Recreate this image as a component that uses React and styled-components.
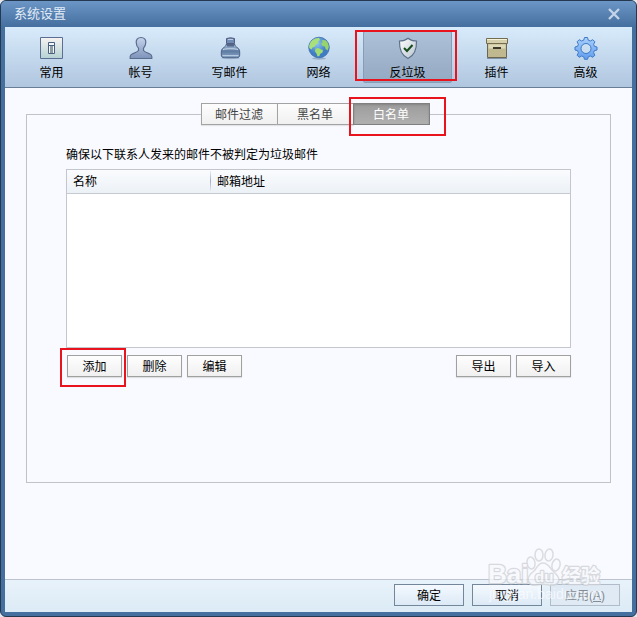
import React, { useState } from 'react'
import styled, { createGlobalStyle } from 'styled-components'

const tools = [
  { name: '常用', icon: GeneralIcon },
  { name: '帐号', icon: AccountIcon },
  { name: '写邮件', icon: ComposeIcon },
  { name: '网络', icon: NetworkIcon },
  { name: '反垃圾', icon: ShieldIcon, marked: true },
  { name: '插件', icon: PluginIcon },
  { name: '高级', icon: GearIcon },
]

const tabs = [
  { name: '邮件过滤' },
  { name: '黑名单' },
  { name: '白名单', marked: true },
]

function App() {
  const [tool, setTool] = useState('反垃圾')
  const [tab, setTab] = useState('白名单')

  return (
    <>
      <GlobalStyle />
      <Window>
        <TitleBar>
          <Title>系统设置</Title>
          <CloseButton aria-label="关闭">
            <svg width="12" height="12" viewBox="0 0 12 12">
              <path d="M1 1 11 11M11 1 1 11" stroke="#c3d4e8" strokeWidth="2.4" />
            </svg>
          </CloseButton>
        </TitleBar>
        <Body>
          <Toolbar>
            {tools.map(({ name, icon: Icon, marked }) => (
              <Anchor key={name}>
                <ToolButton $active={tool === name} onClick={() => setTool(name)}>
                  <Icon />
                  {name}
                </ToolButton>
                {marked && <ToolMark />}
              </Anchor>
            ))}
          </Toolbar>
          <Main>
            <Group>
              <Tabs>
                {tabs.map(({ name, marked }) => (
                  <Anchor key={name}>
                    <Tab $active={tab === name} onClick={() => setTab(name)}>{name}</Tab>
                    {marked && <TabMark />}
                  </Anchor>
                ))}
              </Tabs>
              <Hint>确保以下联系人发来的邮件不被判定为垃圾邮件</Hint>
              <List>
                <Table>
                  <thead>
                    <tr>
                      <NameHead>名称</NameHead>
                      <Head>邮箱地址</Head>
                    </tr>
                  </thead>
                  <tbody />
                </Table>
              </List>
              <Actions>
                <Buttons>
                  <Anchor>
                    <Button>添加</Button>
                    <AddMark />
                  </Anchor>
                  <Button>删除</Button>
                  <Button>编辑</Button>
                </Buttons>
                <Buttons>
                  <Button>导出</Button>
                  <Button>导入</Button>
                </Buttons>
              </Actions>
            </Group>
          </Main>
          <Footer>
            <FooterButton>确定</FooterButton>
            <FooterButton>取消</FooterButton>
            <FooterButton disabled>应用(<u>A</u>)</FooterButton>
            <Watermark />
          </Footer>
        </Body>
      </Window>
    </>
  )
}

function GeneralIcon() {
  return (
    <Icon viewBox="0 0 24 24">
      <defs>
        <linearGradient id="general" x2="0" y2="1">
          <stop offset="0" stopColor="#f6f3f1" />
          <stop offset="1" stopColor="#b5d2d3" />
        </linearGradient>
      </defs>
      <path d="M.5 1.500h22v21H.5z" fill="url(#general)" stroke="#5c6e91" />
      <path d="M8.500 6.500h6v11h-6z" fill="#f4f8fa" stroke="#4a5f80" />
      <path d="M10 10h3v7h-3z" fill="#8e9da3" />
      <path d="M8.500 9.500h6" stroke="#4a5f80" />
    </Icon>
  )
}

function AccountIcon() {
  return (
    <Icon viewBox="0 0 24 24">
      <defs>
        <linearGradient id="account" x2="0" y2="1">
          <stop offset="0" stopColor="#c5d3ec" />
          <stop offset="1" stopColor="#7d93b9" />
        </linearGradient>
      </defs>
      <path
        d="M12 1.500c-3.200 0-5 2-4.800 5 .1 2.200.9 4.300 2.300 5.700v2.300c-1 1.700-3.600 2.400-6 3.300-1.600.7-2.300 1.600-2.300 2.700v2h21.600v-2c0-1.100-.7-2-2.300-2.700-2.400-.9-5-1.600-6-3.300v-2.300c1.400-1.400 2.200-3.500 2.300-5.700.2-3-1.600-5-4.800-5z"
        fill="url(#account)"
        stroke="#5b6d8f"
        strokeWidth="1.200"
      />
    </Icon>
  )
}

function ComposeIcon() {
  return (
    <Icon viewBox="0 0 24 24">
      <defs>
        <linearGradient id="ink" x2="0" y2="1">
          <stop offset="0" stopColor="#a9bfda" />
          <stop offset=".5" stopColor="#5d7aa2" />
          <stop offset="1" stopColor="#8aa5c5" />
        </linearGradient>
      </defs>
      <ellipse cx="12.500" cy="22" rx="9.500" ry="1.200" fill="#7e96b6" opacity=".5" />
      <path d="M8 8.500c0 1.500-1 2.200-2.200 3C4 12.700 3.300 14 3.300 16v3c0 1.800 1 2.700 3 2.700h12.400c2 0 3-.9 3-2.700v-3c0-2-.7-3.300-2.500-4.500-1.200-.8-2.200-1.500-2.200-3z" fill="url(#ink)" stroke="#4d6288" />
      <path d="M4.500 19.500h16" stroke="#b5cbe2" />
      <path d="M5 13.500c2-1 13-1 15 0" fill="none" stroke="#cfdeee" />
      <path d="M8.500 2.500q4-1.500 8 0v5h-8z" fill="#718cb2" stroke="#525d84" />
      <path d="M10 3.500h5" stroke="#bacce2" />
      <path d="M9 8h7v2.500H9z" fill="#536788" />
    </Icon>
  )
}

function NetworkIcon() {
  return (
    <Icon viewBox="0 0 24 24">
      <defs>
        <radialGradient id="globe" cx=".4" cy=".3">
          <stop offset="0" stopColor="#8fc6ef" />
          <stop offset="1" stopColor="#3f7cc4" />
        </radialGradient>
      </defs>
      <ellipse cx="12" cy="22.500" rx="7" ry="1.200" fill="#6f88a6" opacity=".5" />
      <circle cx="12" cy="11.500" r="10.300" fill="url(#globe)" stroke="#3c6dab" strokeWidth=".8" />
      <path d="M5 4.500c2-2 5-2.800 7-2.500l1 2-2 1.500.5 1.500-2.500 1.500-1 2-2.500 1-1 2L2.200 12C1.800 9 3 6.500 5 4.500z" fill="#a8e07c" />
      <path d="m8.500 12.500 3-.5 2.500 1.500 2 .5-.5 2.500-2.500 1.500-.5 2-2 .5-1-3-1.500-2z" fill="#a0dc70" />
      <path d="m15 4 3.500.3c2 1.500 3.300 4 3.300 7l-1.300 3.200-2-1.500-.5-2.500-2.500-.5-1.500-2.500 1.500-1z" fill="#98d46c" />
    </Icon>
  )
}

function ShieldIcon() {
  return (
    <Icon viewBox="0 0 24 24">
      <defs>
        <linearGradient id="shield" x2="1" y2="1">
          <stop offset="0" stopColor="#fff" />
          <stop offset="1" stopColor="#b6c3cd" />
        </linearGradient>
      </defs>
      <path d="M12 2.200C9.500 4.300 6.500 5 3.500 5c-.3 8 1.500 14.200 8.500 17.500C19 19.200 20.800 13 20.500 5c-3 0-6-.7-8.500-2.800z" fill="url(#shield)" stroke="#5d708c" strokeWidth="1.200" />
      <path d="m8 12 3 3 5.500-6" fill="none" stroke="#144a1c" strokeWidth="2" />
    </Icon>
  )
}

function PluginIcon() {
  return (
    <Icon viewBox="0 0 24 24">
      <path d="M2 22h20v1H2z" fill="#8094a8" />
      <path d="M2.500 7.500h19v14h-19z" fill="#c0b98f" stroke="#6b6651" />
      <path d="M3.500 8.500h17v4h-17z" fill="#ddd8b6" />
      <path d="M1.500 2.500h21v5h-21z" fill="#d5cfab" stroke="#726c51" />
      <path d="M2 3.500h20" stroke="#f5f2da" />
      <path d="M8 12h8" stroke="#3c3a2d" strokeWidth="2" />
    </Icon>
  )
}

function GearIcon() {
  return (
    <Icon viewBox="0 0 24 24">
      <defs>
        <linearGradient id="gear" x2="0" y2="1">
          <stop offset="0" stopColor="#a9d0fb" />
          <stop offset="1" stopColor="#5f9cee" />
        </linearGradient>
      </defs>
      <path
        fillRule="evenodd"
        d="m10.500 1.500h3l.8 2.700 2 .8 2.500-1.300 2.100 2.100L19.600 8.300l.8 2L23 11v3l-2.600.7-.8 2 1.300 2.500-2.100 2.100-2.500-1.300-2 .8-.8 2.500h-3l-.8-2.500-2-.8-2.500 1.300-2.100-2.100 1.300-2.500-.8-2L1 14v-3l2.600-.7.8-2-1.300-2.500 2.100-2.100L7.700 5l2-.8zM12 7.500a5 5 0 1 0 0 10 5 5 0 0 0 0-10z"
        fill="url(#gear)"
        stroke="#3f78c4"
        strokeLinejoin="round"
      />
    </Icon>
  )
}

function Watermark() {
  return (
    <Mark viewBox="0 0 122 60" aria-hidden="true">
      <g fill="#f9faff" fillOpacity=".8" stroke="#d3d5d9" strokeWidth="1.500">
        <ellipse cx="43" cy="17" rx="4" ry="6" transform="rotate(-8 43 17)" />
        <ellipse cx="51" cy="9" rx="4" ry="6" />
        <ellipse cx="61" cy="9" rx="4" ry="6" transform="rotate(8 61 9)" />
        <ellipse cx="68" cy="19" rx="4" ry="6" transform="rotate(15 68 19)" />
        <path d="M55 17c-5 0-6 5-9 8-4 3-6 5-6 9 1 5 5 6 9 5 4-1 8-1 12 0 5 1 9 0 10-5 0-4-3-6-6-9s-5-8-10-8z" />
      </g>
      <g fontFamily="Liberation Sans, Noto Sans CJK SC, sans-serif" fontWeight="bold" paintOrder="stroke" fill="#f7f9fd" stroke="#d0d2d6" strokeWidth="2.500" strokeLinejoin="round">
        <text x="0" y="37" fontSize="26">Bai</text>
        <text x="47" y="36" fontSize="15">du</text>
        <text x="74" y="37" fontSize="19">经验</text>
      </g>
      <text x="1" y="53" fontSize="14" fontFamily="Liberation Sans, sans-serif" fill="#fff" fillOpacity=".8">
        jingyan.baidu.com
      </text>
    </Mark>
  )
}

const GlobalStyle = createGlobalStyle`
  * {
    box-sizing: border-box;
  }
  body {
    margin: 0;
    background: #e4e8ee;
  }
  body, button, table {
    font-family: "Liberation Sans", "Noto Sans CJK SC", sans-serif;
    font-size: 12px;
    line-height: 16px;
    color: #000;
  }
  button {
    margin: 0;
    padding: 2px 0 0;
  }
`;

const Window = styled.div`
  display: flex;
  flex-direction: column;
  min-height: 100vh;
  padding: 0 4px 4px;
  border: 1px solid #24384f;
  border-radius: 6px;
  background: #446f9f;
  overflow: hidden;
`;

const TitleBar = styled.header`
  display: flex;
  align-items: center;
  justify-content: space-between;
  height: 26px;
  margin: 0 -4px;
  padding: 0 16px 0 13px;
  background: linear-gradient(#6c96c6, #456f9f);
`;

const Title = styled.h1`
  margin: 0;
  font-size: 13px;
  font-weight: normal;
  color: #e2ecf7;
`;

const CloseButton = styled.button`
  display: flex;
  padding: 0;
  border: none;
  background: none;
`;

const Body = styled.div`
  flex: 1;
  display: flex;
  flex-direction: column;
  background: #f9faff;
`;

const Toolbar = styled.nav`
  display: grid;
  grid-template-columns: repeat(7, 1fr);
  padding: 4px 2px;
  border-bottom: 1px solid #667f96;
  background: linear-gradient(#d8ebfb, #b0c6df);
`;

/* holds a control together with the red frame drawn around it */
const Anchor = styled.div`
  position: relative;
`;

const ToolButton = styled.button`
  display: flex;
  flex-direction: column;
  align-items: center;
  gap: 5px;
  width: 100%;
  height: 52px;
  padding-top: 4px;
  border: 1px solid ${(p) => (p.$active ? '#879db7' : 'transparent')};
  border-radius: 2px;
  background: ${(p) => (p.$active ? 'linear-gradient(#adc1d7, #94a9c2)' : 'none')};
`;

const Icon = styled.svg`
  width: 24px;
  height: 24px;
`;

const RedFrame = styled.span`
  position: absolute;
  z-index: 1;
  border: 2px solid #e8131c;
  pointer-events: none;
`;

const ToolMark = styled(RedFrame)`
  inset: -1px -5px 2px -8px;
`;

const TabMark = styled(RedFrame)`
  inset: -6px -17px -11px -4px;
`;

const AddMark = styled(RedFrame)`
  inset: -7px -4px -10px -7px;
`;

const Main = styled.main`
  flex: 1;
  display: flex;
  flex-direction: column;
  padding: 26px 21px 96px;
`;

const Group = styled.section`
  flex: 1;
  padding: 0 39px 40px;
  border: 1px solid #c0c2c8;
`;

const Tabs = styled.div`
  display: flex;
  justify-content: center;
  margin: -12px 8px 0 0;
`;

const Tab = styled.button`
  display: block;
  width: 77px;
  height: 22px;
  margin-right: -1px;
  border: 1px solid ${(p) => (p.$active ? '#808080' : '#a3a3a3')};
  background: ${(p) => (p.$active ? 'linear-gradient(#9c9c9c, #b0b0b0)' : 'linear-gradient(#fdfdfd, #f0f0f0)')};
  box-shadow: ${(p) => (p.$active ? 'inset 0 1px 2px #868686' : '0 1px 1px #e2e3e7')};
  color: ${(p) => (p.$active ? '#fff' : '#444')};
`;

const Hint = styled.p`
  margin: 22px 0 6px;
`;

const List = styled.div`
  height: 179px;
  border: 1px solid #c3c6cf;
  background: #fff;
`;

const Table = styled.table`
  width: 100%;
  table-layout: fixed;
  border-collapse: collapse;

  thead {
    background: linear-gradient(#fafcfe, #ecf1f6);
  }
`;

const Head = styled.th`
  height: 23px;
  padding: 2px 6px 0;
  border-bottom: 1px solid #c6cad3;
  font-weight: normal;
  text-align: left;
`;

const NameHead = styled(Head)`
  width: 144px;
  background: linear-gradient(#e6ebf2, #a0aec2, #e6ebf2) right center / 1px 20px no-repeat;
`;

const Actions = styled.div`
  display: flex;
  justify-content: space-between;
  margin-top: 7px;
  padding-left: 1px;
`;

const Buttons = styled.div`
  display: flex;
  gap: 5px;
`;

const Button = styled.button`
  display: block;
  width: 55px;
  height: 22px;
  border: 1px solid #a0a19f;
  background: linear-gradient(#fefefe, #f0f0f0);
  box-shadow: 0 1px 1px #dfe0e4;
`;

const Footer = styled.footer`
  position: relative;
  display: flex;
  justify-content: flex-end;
  gap: 8px;
  padding: 4px 12px 6px;
  border-top: 1px solid #bcc3cf;
  background: linear-gradient(#e8f2fa, #dcebf6);
`;

const FooterButton = styled.button`
  width: 70px;
  height: 22px;
  border: 1px solid #74869a;
  background: linear-gradient(#f4f9fe, #dce9f6);

  &:disabled {
    border-color: #b0bcca;
    background: #dfeaf5;
    color: #858b92;
  }
`;

const Mark = styled.svg`
  position: absolute;
  right: 22px;
  bottom: 6px;
  width: 122px;
  height: 60px;
  opacity: 0.8;
  pointer-events: none;
`;

export default App
